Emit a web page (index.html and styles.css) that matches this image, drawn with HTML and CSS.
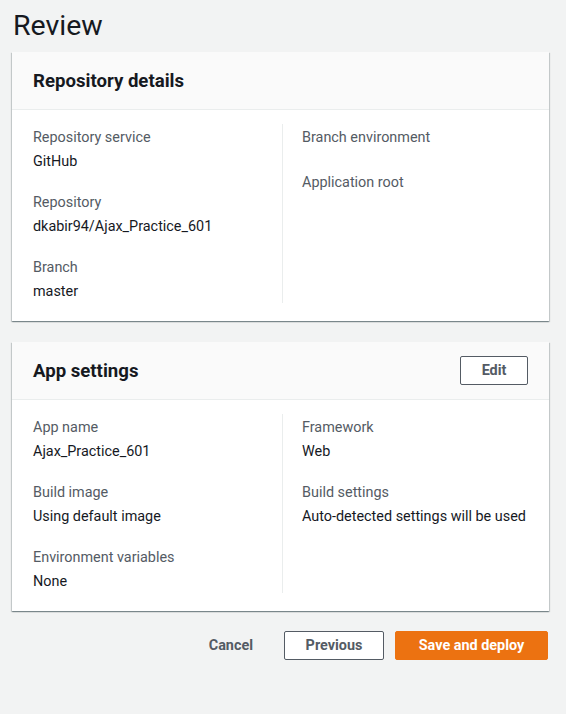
FILE: index.html
```html
<!DOCTYPE html>
<html>
<head>
<meta charset="utf-8">
<link rel="stylesheet" href="styles.css">
</head>
<body>
<div class="page">
  <h1 class="title">Review</h1>
  <section class="card">
    <div class="card-header">
      <h2 class="card-title">Repository details</h2>
    </div>
    <div class="card-body">
      <div class="col">
        <div class="field"><div class="label">Repository service</div><div class="value">GitHub</div></div>
        <div class="field"><div class="label">Repository</div><div class="value">dkabir94/Ajax_Practice_601</div></div>
        <div class="field"><div class="label">Branch</div><div class="value">master</div></div>
      </div>
      <div class="col col-right">
        <div class="field field-empty"><div class="label">Branch environment</div></div>
        <div class="field field-empty"><div class="label">Application root</div></div>
      </div>
    </div>
  </section>
  <section class="card">
    <div class="card-header">
      <h2 class="card-title">App settings</h2>
      <button class="btn btn-normal btn-small">Edit</button>
    </div>
    <div class="card-body">
      <div class="col">
        <div class="field"><div class="label">App name</div><div class="value">Ajax_Practice_601</div></div>
        <div class="field"><div class="label">Build image</div><div class="value">Using default image</div></div>
        <div class="field"><div class="label">Environment variables</div><div class="value">None</div></div>
      </div>
      <div class="col col-right">
        <div class="field"><div class="label">Framework</div><div class="value">Web</div></div>
        <div class="field"><div class="label">Build settings</div><div class="value">Auto-detected settings will be used</div></div>
      </div>
    </div>
  </section>
  <div class="actions">
    <button class="btn btn-link">Cancel</button>
    <button class="btn btn-normal">Previous</button>
    <button class="btn btn-primary">Save and deploy</button>
  </div>
</div>
</body>
</html>
```
FILE: styles.css
```css
html, body {
  margin: 0;
  padding: 0;
  background: #f2f3f3;
}
body {
  font-family: Roboto, "Noto Sans", sans-serif;
  color: #16191f;
  font-size: 14.4px;
}
.page {
  padding: 6px 17px 0 12px;
}
.title {
  margin: 0 0 0 1px;
  font-size: 28.5px;
  font-weight: 400;
  line-height: 40px;
  color: #16191f;
}
.card {
  background: #fff;
  box-shadow: 0 1px 1px 0 rgba(0,28,36,0.3), 1px 1px 1px 0 rgba(0,28,36,0.15), -1px 1px 1px 0 rgba(0,28,36,0.15);
  margin-top: 6px;
  margin-bottom: 21px;
}
.card-header {
  background: #fafafa;
  border-bottom: 1px solid #eaeded;
  height: 57px;
  padding: 0 21px 0 21px;
  display: flex;
  align-items: center;
  justify-content: space-between;
}
.card-title {
  margin: 0;
  font-size: 18.6px;
  font-weight: 700;
  line-height: 22px;
}
.card-body {
  display: grid;
  grid-template-columns: 249px 1fr;
  padding: 17px 20px 18px 21px;
}
.col-right {
  border-left: 1px solid #eaeded;
  padding-left: 19px;
  margin-top: -3px;
  margin-bottom: 0;
}
.col-right .field:first-child {
  margin-top: 3px;
}
.col {
  display: flex;
  flex-direction: column;
  gap: 19px;
}
.label {
  color: #545b64;
  line-height: 22px;
  white-space: nowrap;
}
.value {
  margin-top: 2px;
  line-height: 22px;
  white-space: nowrap;
}
.field-empty {
  height: 26px;
}
.btn {
  font-family: inherit;
  font-size: 14.4px;
  font-weight: 700;
  border-radius: 2px;
  cursor: pointer;
  height: 29px;
  line-height: 20px;
  padding: 0 20px;
  white-space: nowrap;
}
.btn-normal {
  background: #fff;
  border: 1px solid #545b64;
  color: #545b64;
}
.btn-small {
  width: 68px;
  padding: 0;
}
.btn-link {
  background: none;
  border: none;
  color: #545b64;
  padding: 0 20px;
}
.btn-primary {
  background: #ec7211;
  border: 1px solid #ec7211;
  color: #fff;
  width: 153px;
}
.actions {
  display: flex;
  justify-content: flex-end;
  gap: 11px;
  margin-top: -1px;
  margin-right: 1px;
}
.actions .btn-normal {
  width: 100px;
}
```
